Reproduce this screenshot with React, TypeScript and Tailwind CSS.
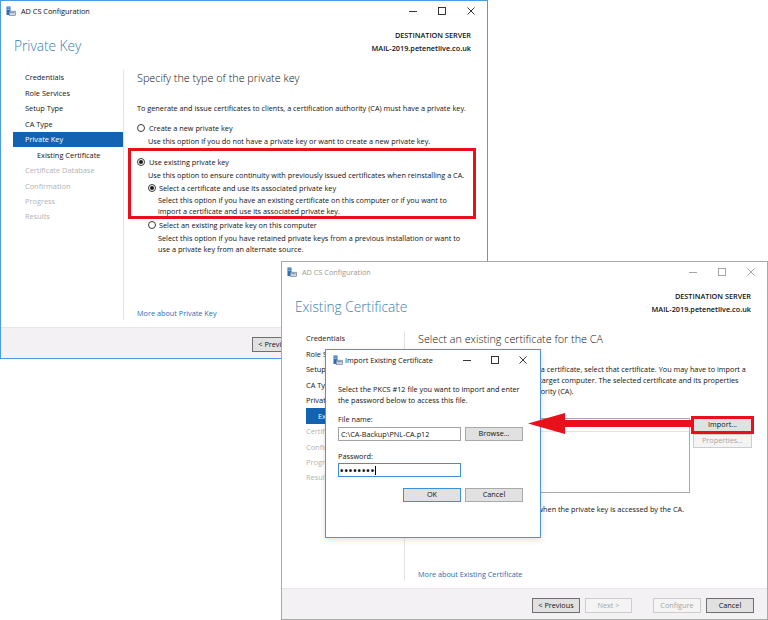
import React from 'react';

type NavItem = { label: string; sub?: boolean; disabled?: boolean; selected?: boolean };

const steps: NavItem[] = [
  { label: 'Credentials' },
  { label: 'Role Services' },
  { label: 'Setup Type' },
  { label: 'CA Type' },
  { label: 'Private Key' },
  { label: 'Existing Certificate', sub: true },
  { label: 'Certificate Database', disabled: true },
  { label: 'Confirmation', disabled: true },
  { label: 'Progress', disabled: true },
  { label: 'Results', disabled: true },
];

const navFor = (current: string) => steps.map((s) => ({ ...s, selected: s.label === current }));

function AppIcon() {
  return (
    <svg width="10" height="10" viewBox="0 0 10 10">
      <rect x="0.5" y="0.5" width="4" height="8.5" fill="#2d6db5" />
      <rect x="1.2" y="1.5" width="2.6" height="0.8" fill="#a8cbef" />
      <rect x="1.2" y="3" width="2.6" height="0.8" fill="#a8cbef" />
      <rect x="3.2" y="5.2" width="6.3" height="4.2" fill="#cfd8e2" stroke="#56718f" strokeWidth="0.6" />
      <rect x="4.2" y="6.4" width="4.2" height="0.7" fill="#56718f" />
    </svg>
  );
}

function Controls({ dim, small }: { dim?: boolean; small?: boolean }) {
  const c = dim ? '#9d9d9d' : '#1f1f1f';
  const box = small ? 'flex h-full w-[28px] items-center justify-center' : 'flex h-full w-[29px] items-center justify-center';
  return (
    <div className={small ? 'ml-auto flex h-full pr-[3px]' : 'ml-auto flex h-full pr-[2px]'}>
      <div className={box}>
        <svg width="8" height="8" viewBox="0 0 8 8">
          <line x1="0" y1="4.5" x2="8" y2="4.5" stroke={c} strokeWidth="0.9" />
        </svg>
      </div>
      <div className={box}>
        <svg width="8" height="8" viewBox="0 0 8 8">
          <rect x="0.5" y="0.5" width="7" height="7" fill="none" stroke={c} strokeWidth="0.9" />
        </svg>
      </div>
      <div className={box}>
        <svg width="8" height="8" viewBox="0 0 8 8">
          <path d="M0.5 0.5 L7.5 7.5 M7.5 0.5 L0.5 7.5" stroke={c} strokeWidth="0.9" />
        </svg>
      </div>
    </div>
  );
}

function Btn({ children, kind = 'normal', className = '' }: { children: React.ReactNode; kind?: string; className?: string }) {
  const k =
    kind === 'disabled'
      ? 'border-[#cdcdcd] bg-[#f4f4f4] text-[#a6a6a6]'
      : kind === 'focus'
        ? 'border-[#3d8ee0] bg-[#e1e1e1]'
        : kind === 'dark'
          ? 'border-[#6f6f6f] bg-[#e1e1e1]'
          : 'border-[#a9a9a9] bg-[#e1e1e1]';
  return <div className={`flex items-center justify-center border leading-none ${k} ${className}`}>{children}</div>;
}

function Radio({ on }: { on?: boolean }) {
  return (
    <span className="flex h-[8px] w-[8px] shrink-0 items-center justify-center rounded-full border border-[#3a3a3a] bg-white">
      {on && <span className="h-[4px] w-[4px] rounded-full bg-[#1b1b1b]" />}
    </span>
  );
}

function Wizard({
  active,
  heading,
  nav,
  link,
  children,
}: {
  active?: boolean;
  heading: string;
  nav: NavItem[];
  link: string;
  children: React.ReactNode;
}) {
  return (
    <div
      className={
        active
          ? 'flex h-full flex-col border border-[#4c9be5] bg-white'
          : 'flex h-full flex-col border border-[#a9a9a9] bg-white'
      }
    >
      <div className="flex h-[20px] items-center">
        <div className="ml-[5px] flex items-center gap-[5px]">
          <AppIcon />
          <span className={active ? 'text-[#111]' : 'text-[#999]'}>AD CS Configuration</span>
        </div>
        <Controls dim={!active} />
      </div>

      <div className="flex h-[47px] justify-between">
        <div className="pl-[13px] pt-[16px] text-[13.7px] font-light leading-[18px] text-[#3a80b3]">{heading}</div>
        <div className="pr-[16px] pt-[8px] text-right font-semibold leading-[13px] text-[#111]">
          <div>DESTINATION SERVER</div>
          <div>MAIL-2019.petenetlive.co.uk</div>
        </div>
      </div>

      <div className="flex h-[259px]">
        <div className="w-[122px] pt-[2.3px] text-[7.4px]">
          {nav.map((n) => (
            <div
              key={n.label}
              className={[
                'flex h-[15.44px] items-center whitespace-nowrap pl-[12px]',
                n.sub ? 'ml-[24px]' : 'ml-[12px]',
                n.selected ? 'bg-[#1463b2] text-white' : n.disabled ? 'text-[#b3b3b3]' : 'text-[#151515]',
              ].join(' ')}
            >
              {n.label}
            </div>
          ))}
        </div>
        <div className="mb-[7px] mt-[2px] w-px bg-[#e3e3e3]" />
        <div className="flex flex-1 flex-col whitespace-nowrap pl-[13px]">
          {children}
          <div className="mb-[8px] mt-auto leading-[12px] text-[#2a6db5]">{link}</div>
        </div>
      </div>

      <div className="flex h-[31px] justify-end border-t border-[#e9e5ea] bg-[#f4f1f5] pr-[13px] pt-[9px]">
        <Btn kind="dark" className="h-[15px] w-[48px]">&lt; Previous</Btn>
        <Btn kind="disabled" className="ml-[5px] h-[15px] w-[47px]">Next &gt;</Btn>
        <Btn kind="disabled" className="ml-[21px] h-[15px] w-[48px]">Configure</Btn>
        <Btn kind="dark" className="ml-[5px] h-[15px] w-[48px]">Cancel</Btn>
      </div>
    </div>
  );
}

function PrivateKeyPage() {
  return (
    <>
      <div className="mt-[1px] h-[18px] text-[10.8px] font-light leading-[18px]">Specify the type of the private key</div>
      <div className="mt-[15px] leading-[12px]">
        To generate and issue certificates to clients, a certification authority (CA) must have a private key.
      </div>
      <div className="mt-[8px] flex h-[12px] items-center gap-[4px]">
        <Radio />
        Create a new private key
      </div>
      <div className="mt-[1px] pl-[11px] leading-[12px]">
        Use this option if you do not have a private key or want to create a new private key.
      </div>
      <div className="mt-[9px] flex h-[12px] items-center gap-[4px]">
        <Radio on />
        Use existing private key
      </div>
      <div className="mt-[1px] pl-[11px] leading-[12px]">
        Use this option to ensure continuity with previously issued certificates when reinstalling a CA.
      </div>
      <div className="ml-[11px] mt-[1px] flex h-[12px] items-center gap-[3px]">
        <Radio on />
        Select a certificate and use its associated private key
      </div>
      <div className="mt-[1px] pl-[21px] leading-[10.5px]">
        Select this option if you have an existing certificate on this computer or if you want to
        <br />
        import a certificate and use its associated private key.
      </div>
      <div className="ml-[11px] mt-[3px] flex h-[12px] items-center gap-[3px]">
        <Radio />
        Select an existing private key on this computer
      </div>
      <div className="mt-[2px] pl-[21px] leading-[10.5px]">
        Select this option if you have retained private keys from a previous installation or want to
        <br />
        use a private key from an alternate source.
      </div>
    </>
  );
}

function ExistingCertPage() {
  return (
    <>
      <div className="mt-[1px] h-[18px] text-[10.8px] font-light leading-[18px]">
        Select an existing certificate for the CA
      </div>
      <div className="mt-[15.5px] leading-[11px]">
        To use the existing private key from a certificate, select that certificate. You may have to import a
        <br />
        certificate and its private key to the target computer. The selected certificate and its properties
        <br />
        will be used by the certification authority (CA).
      </div>
      <div className="mt-[21.5px] flex gap-[3px]">
        <div className="h-[75px] w-[272px] border border-[#ababab] bg-white">
          <div className="h-[13px] border-b border-[#e4e4e4]" />
        </div>
        <div className="flex flex-col gap-[2px]">
          <Btn className="h-[14px] w-[59px]">Import...</Btn>
          <Btn kind="disabled" className="h-[14px] w-[59px]">Properties...</Btn>
        </div>
      </div>
      <div className="mt-[10px] flex h-[12px] items-center gap-[4px]">
        <span className="h-[8px] w-[8px] border border-[#3a3a3a] bg-white" />
        Allow administrator interaction when the private key is accessed by the CA.
      </div>
    </>
  );
}

function ImportDialog() {
  return (
    <div className="flex h-full flex-col border border-[#4a95e2] bg-white shadow-[0_2px_6px_rgba(0,0,0,0.12)]">
      <div className="flex h-[20px] items-center">
        <div className="ml-[7px] flex items-center gap-[2px]">
          <AppIcon />
          <span className="text-[#111]">Import Existing Certificate</span>
        </div>
        <Controls small />
      </div>
      <div className="flex flex-col whitespace-nowrap pl-[12px] pt-[13.5px]">
        <div className="leading-[11px]">
          Select the PKCS #12 file you want to import and enter
          <br />
          the password below to access this file.
        </div>
        <div className="mt-[8px] leading-[11px]">File name:</div>
        <div className="mt-[2.5px] flex gap-[4px]">
          <div className="flex h-[14px] w-[123px] items-center border border-[#a3a3a3] px-[2px]">
            {'C:\\CA-Backup\\PNL-CA.p12'}
          </div>
          <Btn className="h-[14px] w-[58px]">Browse...</Btn>
        </div>
        <div className="mt-[9.5px] leading-[11px]">Password:</div>
        <div className="mt-[1.5px] flex h-[14px] w-[123px] items-center border border-[#3d8fe0] px-[1px]">
          <span className="text-[9px] font-bold leading-none tracking-[1px]">••••••••</span>
          <span className="h-[9px] w-px bg-black" />
        </div>
        <div className="mt-[11px] flex gap-[4px] pl-[65px]">
          <Btn kind="focus" className="h-[14px] w-[58px]">OK</Btn>
          <Btn className="h-[14px] w-[58px]">Cancel</Btn>
        </div>
      </div>
    </div>
  );
}

export default function App() {
  return (
    <div className="relative h-[620px] w-[768px] overflow-hidden bg-white font-['Open_Sans',sans-serif] text-[7.3px] text-[#111]">
      <div className="absolute left-0 top-0 h-[359px] w-[488px]">
        <Wizard active heading="Private Key" nav={navFor('Private Key')} link="More about Private Key">
          <PrivateKeyPage />
        </Wizard>
      </div>
      <div className="absolute left-[128px] top-[148px] h-[71px] w-[348px] border-[3px] border-[#e8111b]" />

      <div className="absolute left-[281px] top-[261px] h-[359px] w-[487px]">
        <Wizard heading="Existing Certificate" nav={navFor('Existing Certificate')} link="More about Existing Certificate">
          <ExistingCertPage />
        </Wizard>
      </div>
      <div className="absolute left-[691px] top-[416px] h-[18px] w-[63px] border-[3px] border-[#e8111b]" />

      <div className="absolute left-[325px] top-[349px] h-[189px] w-[216px]">
        <ImportDialog />
      </div>

      <svg className="absolute left-[526px] top-[410px]" width="168" height="28" viewBox="0 0 168 28">
        <polygon points="2,13.5 39,3 39,10 166,10 166,17 39,17 39,24" fill="#e8111b" />
      </svg>
    </div>
  );
}
